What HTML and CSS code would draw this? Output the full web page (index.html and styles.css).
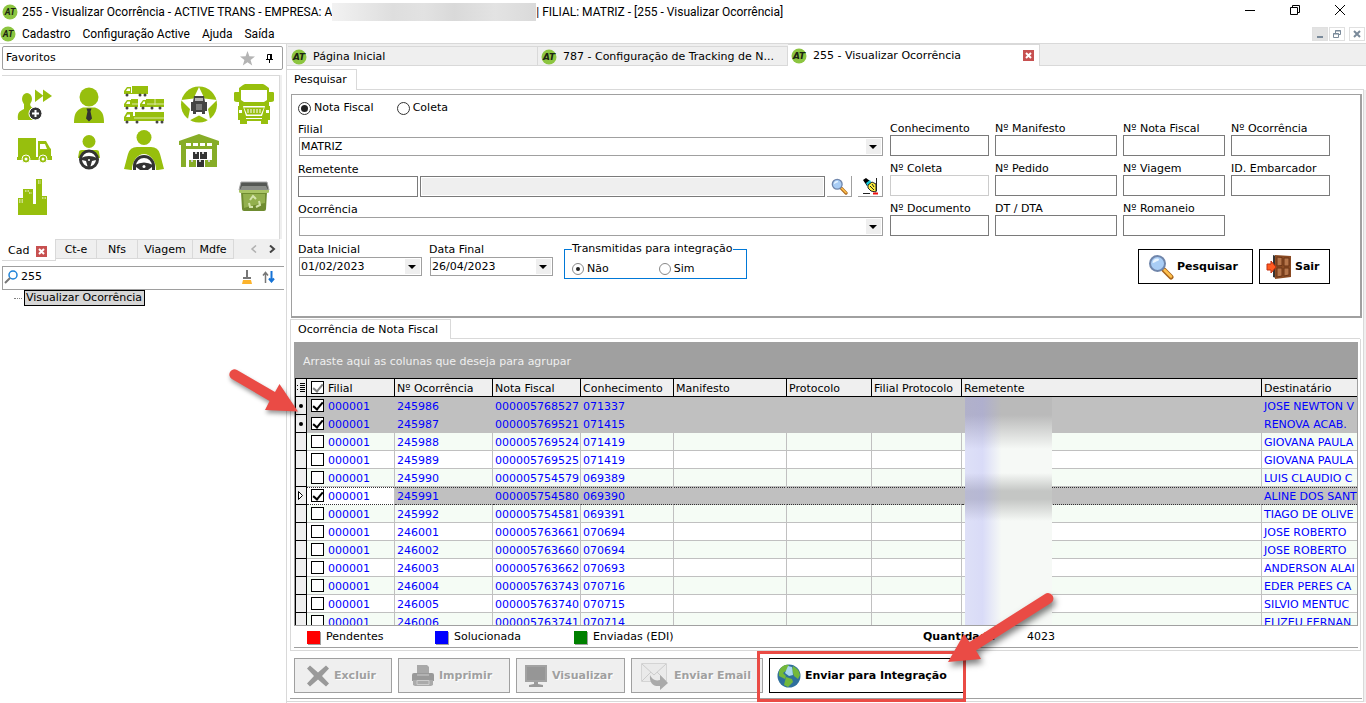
FILE: index.html
```html
<!DOCTYPE html>
<html lang="pt-BR">
<head>
    <meta charset="UTF-8">
    <title>Visualizar Ocorrência</title>
    <link rel="stylesheet" href="styles.css">
</head>
<body>
    <svg class="symbols" aria-hidden="true">
        <symbol id="logo" viewBox="0 0 16 16">
            <circle cx="8" cy="8" r="7.5" fill="#8cc540"/>
            <text x="8" y="11" text-anchor="middle" font-size="9" font-weight="bold" font-style="italic" fill="#1c2410">AT</text>
        </symbol>
        <symbol id="lens" viewBox="0 0 26 26">
            <path d="M16 16l7 7" stroke="#a8651c" stroke-width="5" stroke-linecap="round"/>
            <path d="M16.5 16l6.5 6.500" stroke="#ffc04d" stroke-width="2.500" stroke-linecap="round"/>
            <circle cx="9.500" cy="9.500" r="7.500" fill="#a9cdf5" stroke="#7086ab" stroke-width="2"/>
            <path d="M4.500 9a5 5 0 0 1 5-4.500c2 0 2 2 0 2.500s-3 2-5 2z" fill="#eaf5ff"/>
        </symbol>
    </svg>

    <header class="titlebar">
        <svg class="logo"><use href="#logo"/></svg>
        <span>255 - Visualizar Ocorrência - ACTIVE TRANS - EMPRESA: A</span>
        <span class="redacted"></span>
        <span>| FILIAL: MATRIZ - [255 - Visualizar Ocorrência]</span>
        <div class="window-controls">
            <button aria-label="Minimizar"><svg width="12" height="12" viewBox="0 0 12 12"><path d="M1 6.500h10"/></svg></button>
            <button aria-label="Restaurar"><svg width="12" height="12" viewBox="0 0 12 12"><path d="M1.500 3.500h7v7h-7zM3.500 3.500v-2h7v7h-2"/></svg></button>
            <button aria-label="Fechar"><svg width="12" height="12" viewBox="0 0 12 12"><path d="M1 1l10 10M11 1L1 11"/></svg></button>
        </div>
    </header>

    <nav class="menubar">
        <svg class="logo"><use href="#logo"/></svg>
        <a href="#">Cadastro</a>
        <a href="#">Configuração Active</a>
        <a href="#">Ajuda</a>
        <a href="#">Saída</a>
        <div class="mdi-controls">
            <button class="dim" aria-label="Minimizar janela"><svg width="10" height="10" viewBox="0 0 10 10"><path d="M2 8h6" stroke-width="2"/></svg></button>
            <button aria-label="Restaurar janela"><svg width="10" height="10" viewBox="0 0 10 10"><path d="M1.500 4.500h5v4h-5zM1 5h6M3.500 4V1.500h5v4H7M3 2h6"/></svg></button>
            <button class="last" aria-label="Fechar janela"><svg width="10" height="10" viewBox="0 0 10 10"><path d="M2 2l6 6M8 2L2 8" stroke-width="2"/></svg></button>
        </div>
    </nav>

    <div class="layout">
        <aside class="sidebar">
            <div class="favorites-head">
                <span>Favoritos</span>
                <svg width="15" height="15" viewBox="0 0 15 15"><path d="M7.500 0l1.900 5.300 5.600.2-4.400 3.500 1.600 5.500-4.700-3.200-4.700 3.200 1.600-5.500L0 5.500l5.600-.2z" fill="#b4b4b4"/></svg>
                <svg width="9" height="11" viewBox="0 0 9 11"><path d="M2.500 6V1.500h4V6M1 6.500h7M4.500 7v3" fill="none" stroke="#000"/><path d="M5 1h2v5H5z"/></svg>
            </div>

            <div class="favorites">
                <a href="#" aria-label="Cadastro de contatos"><svg viewBox="0 0 40 40">
                    <g fill="#97bf0d"><ellipse cx="13" cy="15" rx="5" ry="6"/><path d="M10 18h6c0 4 1 5 3 6l2 7v5H4c-1-8 2-9 6-11zM21 5.500l8 6V5.500l9 6.500-9 6v-6l-8 6z"/></g>
                    <circle cx="21.500" cy="29.500" r="6.500" fill="#333" stroke="#fff"/><path d="M21.500 26v7M18 29.500h7" stroke="#fff" stroke-width="2"/>
                </svg></a>
                <a href="#" aria-label="Clientes"><svg viewBox="0 0 40 40">
                    <g fill="#97bf0d"><circle cx="20" cy="13" r="9.500"/><path d="M5 39c0-9 2-13 9-15.500h12c7 2.500 9 6.500 9 15.500z"/></g>
                    <path d="M17.500 24.500h5l-1 3 1.500 7-3 3-3-3 1.500-7z" fill="#333"/>
                </svg></a>
                <a href="#" aria-label="Frota"><svg viewBox="0 0 40 40">
                    <g fill="#97bf0d"><path d="M8 2h16v8H0V7l3-4h4v6h1zM0 23v-3l3-4h4v-1h7v8zM16 23v-3l3-4h3v-1h18v8zM0 37v-4l3-5h6v4h2v-4h29v9z"/></g>
                    <path d="M2 7l1.500-2.500H6V7zM2 20l1.500-2.500H6V20zM18 20l1.500-2.500H21V20zM2 33l1.500-2.500H6V33z" fill="#fff"/>
                    <path d="M8 20h6M23 20h17M31 15v6M10 34h30" stroke="#dce9a8"/>
                    <g fill="#444"><circle cx="3" cy="11" r="1.500"/><circle cx="16" cy="11" r="1.500"/><circle cx="21" cy="11" r="1.500"/><circle cx="3" cy="24" r="1.500"/><circle cx="12" cy="24" r="1.500"/><circle cx="19" cy="24" r="1.500"/><circle cx="28" cy="24" r="1.500"/><circle cx="36" cy="24" r="1.500"/><circle cx="3" cy="38" r="1.500"/><circle cx="13" cy="38" r="1.500"/><circle cx="33" cy="38" r="1.500"/><circle cx="38" cy="38" r="1.500"/></g>
                </svg></a>
                <a href="#" aria-label="Caminhão"><svg viewBox="0 0 40 40">
                    <circle cx="20" cy="20.500" r="18" fill="#97bf0d"/>
                    <path d="M20 3l5.500 11.500L38 16l-9 9 2.500 12.500L20 31.500 8.500 37.500 11 25l-9-9 12.500-1.500z" fill="#fff"/>
                    <path d="M15 12h10l1 6h2v9h-2v3h-3v-2h-6v2h-3v-3h-2v-9h2z" fill="#444"/>
                    <path d="M16 14h8v3h-8z" fill="#b5b5b5"/><path d="M17 21h6M17 23h6M17 25h6" stroke="#b5b5b5"/>
                </svg></a>
                <a href="#" aria-label="Ônibus"><svg viewBox="0 0 40 40">
                    <path d="M9 1l2-1h18l2 1 4 3v4h4c1 0 1 1 1 2v6c0 1-1 2-3 2h-2v4h1v14h-2v4h-7v-3H13v3H6v-4H4V22h1v-4H3c-2 0-3-1-3-2v-6c0-1 0-2 1-2h4V4z" fill="#97bf0d"/>
                    <path d="M7 6h26v10l-3 2H10l-3-2zM9 22h22l-3 10H12z" fill="#fff"/>
                    <path d="M10 23.500h20l-3 7H13z" fill="#97bf0d"/><path d="M14 25v4M17 25v4M20 25v4M23 25v4M26 25v4" stroke="#fff"/>
                    <path d="M5 26h3v3H5zM32 26h3v3h-3zM12 34h16v1H12z" fill="#fff"/>
                </svg></a>
                <a href="#" aria-label="Veículos"><svg viewBox="0 0 40 40">
                    <path d="M4 8h18v19H4zM24 11h8l4 7 1 1v7h1v4H3v-3h21z" fill="#97bf0d"/>
                    <path d="M26 14h5l2 5h-7z" fill="#fff"/>
                    <g fill="#97bf0d" stroke="#fff"><circle cx="12" cy="29" r="4"/><circle cx="29" cy="29" r="4"/></g>
                    <circle cx="12" cy="29" r="1.500" fill="#fff"/><circle cx="29" cy="29" r="1.500" fill="#fff"/>
                </svg></a>
                <a href="#" aria-label="Motoristas"><svg viewBox="0 0 40 40">
                    <circle cx="20" cy="11.500" r="6.500" fill="#97bf0d"/><path d="M10 22q0-2 3-2h14q3 0 3 2l1 6H9z" fill="#97bf0d"/>
                    <circle cx="20" cy="29.500" r="8.500" fill="#fff" stroke="#333" stroke-width="3"/>
                    <path d="M12 28q8-4 16 0l-1 2-4 1-2 7h-2l-2-7-4-1z" fill="#333"/><circle cx="20" cy="30" r="1" fill="#fff"/>
                </svg></a>
                <a href="#" aria-label="Proprietários"><svg viewBox="0 0 40 40">
                    <circle cx="20" cy="7.500" r="7.500" fill="#97bf0d"/><path d="M0 39l4-15q2-7 9-7h14q7 0 9 7l4 15-6 1H7z" fill="#97bf0d"/>
                    <path d="M8 40a12 16 0 0 1 24 0z" fill="#fff"/>
                    <path d="M10.500 40v-4a9.500 9.500 0 0 1 19 0v4" fill="none" stroke="#333" stroke-width="3"/>
                    <path d="M11 35q9-5 18 0l-1 2-4 3h-8l-4-3z" fill="#333"/><circle cx="20" cy="36.500" r="1.500" fill="#fff"/>
                </svg></a>
                <a href="#" aria-label="Armazém"><svg viewBox="0 0 40 40">
                    <path d="M0 11L20 4l20 7v4h-2v22h-5V19H7v18H2V15H0z" fill="#87ad27"/>
                    <path d="M7 13h5v3H7zM14 13h5v3h-5zM21 13h5v3h-5zM28 13h5v3h-5z" fill="#fff"/>
                    <path d="M14 22h6v7h-6zM21 22h7v7h-7zM18 30h7v7h-7z" fill="#333"/><path d="M10 30h7v7h-7zM26 30h7v7h-7z" fill="#87ad27"/>
                    <path d="M16 22h2v2h-2zM23 22h2v2h-2zM20 30h2v2h-2zM12 30h2v2h-2zM29 30h2v2h-2z" fill="#ccc"/>
                </svg></a>
                <span></span>
                <a href="#" aria-label="Empresas"><svg viewBox="0 0 40 40">
                    <path d="M4 39V22h5V13h10v15h3V3h6v17h5v19z" fill="#97bf0d"/>
                    <path d="M24 5h3M24 7h3M11 15h5M15 17h3M5 24h4M5 26h4M28 22h4" stroke="#fff" stroke-dasharray="1.500 1"/>
                </svg></a>
                <span></span><span></span><span></span>
                <a href="#" aria-label="Lixeira"><svg viewBox="0 0 40 40">
                    <path d="M7 6h26l2 8H5z" fill="#555854" stroke="#aaa"/><path d="M8 10h24l2 4H6z" fill="#8a8d88"/>
                    <path d="M7 16h26l-1 17q0 2-2 2H10q-2 0-2-2z" fill="#6f8c30"/>
                    <path d="M5 14h30v2q0 1-2 1H7q-2 0-2-1z" fill="#a9c465"/><path d="M9 18h22v9q-12 2-21 5z" fill="#93b04e"/>
                    <path d="M16 24l3-4 3 3M25 25l1 4-4 2M19 31h-3l-1-4" fill="none" stroke="#d5e4ac" stroke-width="2"/>
                </svg></a>
            </div>

            <div class="side-tabs">
                <button class="side-tab active">Cad <svg class="close" viewBox="0 0 11 11"><path d="M3 3l5 5M8 3L3 8"/></svg></button>
                <button class="side-tab">Ct-e</button>
                <button class="side-tab">Nfs</button>
                <button class="side-tab wide">Viagem</button>
                <button class="side-tab">Mdfe</button>
                <div class="scroll-buttons">
                    <svg width="8" height="8" viewBox="0 0 8 8"><path d="M6 0.500L2 4l4 3.500" stroke="#b0b0b0" stroke-width="1.500"/></svg>
                    <svg width="8" height="8" viewBox="0 0 8 8"><path d="M2 0.500L6 4 2 7.500" stroke="#444" stroke-width="2"/></svg>
                </div>
            </div>

            <div class="search">
                <svg width="14" height="14" viewBox="0 0 14 14"><circle cx="9" cy="5" r="4" fill="#fff" stroke="#1e82d8" stroke-width="1.500"/><path d="M6 8l-5 5" stroke="#777" stroke-width="2"/></svg>
                <input type="text" value="255" aria-label="Pesquisar no menu">
                <svg width="12" height="14" viewBox="0 0 12 14"><path d="M5 0h2v7h3v2H2V7h3z" fill="#777"/><path d="M2 10h8l1 4H1z" fill="#fcb32c"/></svg>
                <svg width="13" height="12" viewBox="0 0 13 12"><path d="M3.500 12V2M1 4.500L3.500 1.500 6 4.500" fill="none" stroke="#777" stroke-width="1.500"/><path d="M9.500 0v10M7 7.500l2.500 3 2.500-3" fill="none" stroke="#1673d6" stroke-width="2"/></svg>
            </div>
            <div class="tree"><a href="#">Visualizar Ocorrência</a></div>
        </aside>

        <main class="workspace">
            <div class="window-tabs">
                <button class="window-tab"><svg class="logo"><use href="#logo"/></svg>Página Inicial</button>
                <button class="window-tab"><svg class="logo"><use href="#logo"/></svg>787 - Configuração de Tracking de N...</button>
                <button class="window-tab active"><svg class="logo"><use href="#logo"/></svg>255 - Visualizar Ocorrência <svg class="close" viewBox="0 0 11 11"><path d="M3 3l5 5M8 3L3 8"/></svg></button>
            </div>

            <div class="page-tabs"><button class="page-tab">Pesquisar</button></div>
            <div class="page">
                <form class="filters" onsubmit="return false">
                    <div class="filters-left">
                        <div class="type">
                            <label><input type="radio" name="tipo" checked>Nota Fiscal</label>
                            <label><input type="radio" name="tipo">Coleta</label>
                        </div>
                        <div class="field">
                            <label for="filial">Filial</label>
                            <div class="combo"><select id="filial"><option>MATRIZ</option></select></div>
                        </div>
                        <div class="field">
                            <label for="remetente">Remetente</label>
                            <div class="sender">
                                <input type="text" id="remetente">
                                <input type="text" class="sender-name" aria-label="Nome do remetente" disabled>
                                <button class="tool" aria-label="Buscar remetente"><svg width="17" height="17"><use href="#lens"/></svg></button>
                                <button class="tool" aria-label="Limpar remetente"><svg width="17" height="17" viewBox="0 0 17 17"><path d="M1 2l3-2 4 3-3 5z" fill="#000"/><path d="M4 5l4-3 2 4-4 3z" fill="#14c8d8"/><path d="M6 7l4-3 4 2v8l-5-1-3-3z" fill="#ffef3c" stroke="#222"/><path d="M8 8l4 4M10 6l2 3" stroke="#222"/><path d="M14.500 0v13M1 15.500h7" stroke="#222"/><path d="M11 15.500h5" stroke="#e11" stroke-width="2"/></svg></button>
                            </div>
                        </div>
                        <div class="field">
                            <label for="ocorrencia">Ocorrência</label>
                            <div class="combo"><select id="ocorrencia"><option></option></select></div>
                        </div>
                        <div class="dates">
                            <div class="field">
                                <label for="dataInicial">Data Inicial</label>
                                <div class="combo"><input type="text" id="dataInicial" value="01/02/2023"></div>
                            </div>
                            <div class="field">
                                <label for="dataFinal">Data Final</label>
                                <div class="combo"><input type="text" id="dataFinal" value="26/04/2023"></div>
                            </div>
                            <fieldset>
                                <legend>Transmitidas para integração</legend>
                                <label><input type="radio" name="transmitidas" checked>Não</label>
                                <label><input type="radio" name="transmitidas">Sim</label>
                            </fieldset>
                        </div>
                    </div>
                    <div class="filters-right">
                        <div class="numbers">
                            <div class="field"><label for="conhecimento">Conhecimento</label><input type="text" id="conhecimento"></div>
                            <div class="field"><label for="manifesto">Nº Manifesto</label><input type="text" id="manifesto"></div>
                            <div class="field"><label for="notaFiscal">Nº Nota Fiscal</label><input type="text" id="notaFiscal"></div>
                            <div class="field"><label for="numOcorrencia">Nº Ocorrência</label><input type="text" id="numOcorrencia"></div>
                            <div class="field"><label for="coleta">Nº Coleta</label><input type="text" id="coleta" class="off"></div>
                            <div class="field"><label for="pedido">Nº Pedido</label><input type="text" id="pedido"></div>
                            <div class="field"><label for="viagem">Nº Viagem</label><input type="text" id="viagem"></div>
                            <div class="field"><label for="embarcador">ID. Embarcador</label><input type="text" id="embarcador"></div>
                            <div class="field"><label for="documento">Nº Documento</label><input type="text" id="documento"></div>
                            <div class="field"><label for="dta">DT / DTA</label><input type="text" id="dta"></div>
                            <div class="field"><label for="romaneio">Nº Romaneio</label><input type="text" id="romaneio"></div>
                        </div>
                        <div class="form-buttons">
                            <button class="btn"><svg width="26" height="26"><use href="#lens"/></svg>Pesquisar</button>
                            <button class="btn exit"><svg width="26" height="26" viewBox="0 0 26 26"><path d="M7 1l3 1v22l-3-1z" fill="#333"/><path d="M9 1l16 1v21L9 25z" fill="#8a4a22"/><path d="M11 3l5 .5v8l-5 .5zM18 4h5v8h-5zM11 14h5v8l-5 1zM18 14h5v7l-5 1z" fill="#b5754a" stroke="#6b3517"/><path d="M1 10h4V7l5 6-5 6v-3H1z" fill="#ff5a1f" stroke="#c33010"/></svg>Sair</button>
                        </div>
                    </div>
                </form>

                <div class="result-tabs"><button class="result-tab">Ocorrência de Nota Fiscal</button></div>
                <div class="results">
                    <div class="grid">
                        <div class="group-bar">Arraste aqui as colunas que deseja para agrupar</div>
                        <div class="grid-body">
                            <table>
                                <colgroup>
                                    <col class="c-mark"><col class="c-filial"><col class="c-ocorrencia"><col class="c-nota"><col class="c-conhecimento"><col class="c-manifesto"><col class="c-protocolo"><col class="c-filial-prot"><col class="c-remetente"><col>
                                </colgroup>
                                <thead>
                                    <tr><th><svg width="9" height="11" viewBox="0 0 9 11"><path d="M3 1.500h5M3 3.500h5M3 5.500h5M3 7.500h5M3 9.500h5M0 3.500h1M0 7.500h1" stroke="#000"/></svg></th><th><label><input type="checkbox" class="all" checked>Filial</label></th><th>Nº Ocorrência</th><th>Nota Fiscal</th><th>Conhecimento</th><th>Manifesto</th><th>Protocolo</th><th>Filial Protocolo</th><th>Remetente</th><th>Destinatário</th></tr>
                                </thead>
                                <tbody>
                                    <tr class="selected"><td><i class="dot"></i></td><td><label><input type="checkbox" checked>000001</label></td><td>245986</td><td>000005768527</td><td>071337</td><td></td><td></td><td></td><td></td><td>JOSE NEWTON V</td></tr>
                                    <tr class="selected"><td><i class="dot"></i></td><td><label><input type="checkbox" checked>000001</label></td><td>245987</td><td>000005769521</td><td>071415</td><td></td><td></td><td></td><td></td><td>RENOVA ACAB.</td></tr>
                                    <tr><td></td><td><label><input type="checkbox">000001</label></td><td>245988</td><td>000005769524</td><td>071419</td><td></td><td></td><td></td><td></td><td>GIOVANA PAULA</td></tr>
                                    <tr><td></td><td><label><input type="checkbox">000001</label></td><td>245989</td><td>000005769525</td><td>071419</td><td></td><td></td><td></td><td></td><td>GIOVANA PAULA</td></tr>
                                    <tr><td></td><td><label><input type="checkbox">000001</label></td><td>245990</td><td>000005754579</td><td>069389</td><td></td><td></td><td></td><td></td><td>LUIS CLAUDIO C</td></tr>
                                    <tr class="selected current"><td><svg width="7" height="9" viewBox="0 0 7 9"><path d="M1.500 0.500v8L5.500 4.500z" fill="#fff" stroke="#000"/></svg></td><td><label><input type="checkbox" checked>000001</label></td><td>245991</td><td>000005754580</td><td>069390</td><td></td><td></td><td></td><td></td><td>ALINE DOS SANT</td></tr>
                                    <tr><td></td><td><label><input type="checkbox">000001</label></td><td>245992</td><td>000005754581</td><td>069391</td><td></td><td></td><td></td><td></td><td>TIAGO DE OLIVE</td></tr>
                                    <tr><td></td><td><label><input type="checkbox">000001</label></td><td>246001</td><td>000005763661</td><td>070694</td><td></td><td></td><td></td><td></td><td>JOSE ROBERTO</td></tr>
                                    <tr><td></td><td><label><input type="checkbox">000001</label></td><td>246002</td><td>000005763660</td><td>070694</td><td></td><td></td><td></td><td></td><td>JOSE ROBERTO</td></tr>
                                    <tr><td></td><td><label><input type="checkbox">000001</label></td><td>246003</td><td>000005763662</td><td>070693</td><td></td><td></td><td></td><td></td><td>ANDERSON ALAI</td></tr>
                                    <tr><td></td><td><label><input type="checkbox">000001</label></td><td>246004</td><td>000005763743</td><td>070716</td><td></td><td></td><td></td><td></td><td>EDER PERES CA</td></tr>
                                    <tr><td></td><td><label><input type="checkbox">000001</label></td><td>246005</td><td>000005763740</td><td>070715</td><td></td><td></td><td></td><td></td><td>SILVIO MENTUC</td></tr>
                                    <tr><td></td><td><label><input type="checkbox">000001</label></td><td>246006</td><td>000005763741</td><td>070714</td><td></td><td></td><td></td><td></td><td>ELIZEU FERNAN</td></tr>
                                </tbody>
                            </table>
                            <div class="blurred"></div>
                        </div>
                        <svg class="arrow-rows" width="76" height="50" viewBox="0 0 76 50"><path d="M9 2l38 22 4.500-8L70 43.500l-33-1.500 4.500-9L4 11a5 5 0 0 1 5-9z" fill="#ea4b45"/></svg>
                    </div>
                    <div class="summary">
                        <span class="status red">Pendentes</span>
                        <span class="status blue">Solucionada</span>
                        <span class="status green">Enviadas (EDI)</span>
                        <b>Quantidade</b>
                        <span>4023</span>
                    </div>
                </div>

                <div class="actions">
                    <button class="btn" disabled><svg width="24" height="24" viewBox="0 0 24 24"><path d="M4 1.500l8 7 8-7 3 3-7 7.500 7 7.500-3 3-8-7-8 7-3-3L8 12 1 4.500z" fill="#999"/></svg>Excluir</button>
                    <button class="btn print" disabled><svg width="24" height="24" viewBox="0 0 24 24"><path d="M6 1h10l2 2v7H6z" fill="#a8a8a8"/><path d="M1 11q0-2 2-2h18q2 0 2 2v6H1z" fill="#999"/><path d="M2 16h20v5l-2 1H4l-2-1z" fill="#aaa"/><path d="M6 11h12M6 16.500h12v4H6z" fill="#aaa" stroke="#ccc"/></svg>Imprimir</button>
                    <button class="btn view" disabled><svg width="24" height="24" viewBox="0 0 24 24"><path d="M1 1h22v17H1z" fill="#a2a2a2"/><path d="M3 3h18v13H3z" fill="#969696"/><path d="M10 18h4v2l5 1v2H5v-2l5-1z" fill="#999"/></svg>Visualizar</button>
                    <button class="btn mail" disabled><svg width="30" height="28" viewBox="0 0 30 28"><path d="M1.500 1.500h25v18h-25z" fill="#eaeaea" stroke="#d4d4d4"/><path d="M2 2l12 11L26 2M2 19l9-9M26 19l-9-9" fill="none" stroke="#ccc"/><path d="M10 13q3 7 10 5v-5l8 8-8 7v-4Q9 25 10 13z" fill="#aaa"/></svg>Enviar Email</button>
                    <div class="send">
                        <button class="btn integrate"><svg width="24" height="24" viewBox="0 0 24 24"><circle cx="12" cy="12" r="11.500" fill="#2f6f9c"/><path d="M3 5q4-5 9-4l-2 5-4 3 3 3-1 3-6-3q-1-4 1-7zM16 2q6 3 7 9l-2 4-4-3-2-6zM9 13l6 2 1 3-5 5-4-2z" fill="#73b83a"/><path d="M11 2l4 1 1 8-4 1-4-3z" fill="#a9d8ee"/></svg>Enviar para Integração</button>
                        <div class="highlight"></div>
                        <svg class="arrow-send" width="112" height="76" viewBox="0 0 112 76"><path d="M101 4L25.500 52 20 44 4 72l33-3-5-8.500L107 13a5 5 0 0 0-6-9z" fill="#ea4b45"/></svg>
                    </div>
                </div>
            </div>
        </main>
    </div>
</body>
</html>
```
FILE: styles.css
```css
* {
    box-sizing: border-box;
}

body {
    margin: 0;
    height: 100vh;
    display: flex;
    flex-direction: column;
    overflow: hidden;
    background-color: #fff;
    color: #000;
    font-family: "DejaVu Sans", Verdana, sans-serif;
    font-size: 11px;
    line-height: 14px;
}

button,
input,
select {
    font: inherit;
    color: inherit;
    margin: 0;
    padding: 0;
    border: none;
    border-radius: 0;
    background: none;
}

a {
    color: inherit;
    text-decoration: none;
}

svg {
    flex-shrink: 0;
}

.symbols {
    position: absolute;
    width: 0;
    height: 0;
}

.logo {
    width: 16px;
    height: 16px;
}

.close {
    width: 11px;
    height: 11px;
    background-color: #c75050;
    stroke: #fff;
    stroke-width: 2;
}

/* window title and menu */
.titlebar,
.menubar {
    display: flex;
    align-items: center;
    font-family: Roboto, "Segoe UI", sans-serif;
    font-size: 12px;
    white-space: nowrap;
}

.titlebar {
    height: 24px;
    padding: 0 14px 0 2px;
}

.titlebar .logo {
    margin-right: 4px;
}

.redacted {
    width: 204px;
    height: 18px;
    background: linear-gradient(90deg, #f2f2f2, #dedede 30%, #e2e2e2 45%, #d9d9d9 60%, #e3e3e3 80%, #dadada);
}

.window-controls {
    margin-left: auto;
    align-self: flex-start;
    display: flex;
    gap: 33px;
    padding: 4px 6px 0 0;
}

.window-controls button {
    height: 12px;
}

.window-controls svg {
    display: block;
    fill: none;
    stroke: #000;
}

.menubar {
    height: 20px;
    padding-right: 1px;
    border-bottom: 1px solid #d9d9d9;
}

.menubar .logo {
    margin-right: 6px;
}

.menubar a {
    margin-right: 12px;
}

.mdi-controls {
    display: flex;
    gap: 1px;
    margin-left: auto;
}

.mdi-controls button {
    display: flex;
    align-items: center;
    justify-content: center;
    width: 16px;
    height: 14px;
    border: 1px solid #e0e0e0;
}

.mdi-controls .dim {
    background-color: #e3e3e3;
}

.mdi-controls .last {
    margin-left: 3px;
}

.mdi-controls svg {
    fill: none;
    stroke: #7a8a9a;
}

.layout {
    flex: 1;
    min-height: 0;
    display: flex;
}

/* left column */
.sidebar {
    width: 286px;
    flex-shrink: 0;
    padding: 2px 2px 0 2px;
}

.favorites-head {
    display: flex;
    align-items: center;
    height: 24px;
    margin-right: 1px;
    padding: 0 8px 0 3px;
    border: 1px solid #9e9e9e;
    border-radius: 2px;
}

.favorites-head span {
    flex: 1;
}

.favorites-head svg + svg {
    margin-left: 10px;
}

.favorites {
    display: grid;
    grid-template-columns: repeat(5, 55px);
    grid-auto-rows: 46px;
    height: 164px;
    margin: 5px 4px 0 0;
    padding: 5px 0 0 4px;
    border-top: 1px solid #d9d9d9;
    border-right: 1px solid #d9d9d9;
    box-shadow: 2px 0 #efefef;
}

.favorites a {
    display: flex;
    align-items: center;
    justify-content: center;
}

.favorites svg {
    width: 40px;
    height: 40px;
}

.side-tabs {
    display: flex;
    height: 22px;
    margin-right: 4px;
}

.side-tab {
    height: 20px;
    width: 41px;
    padding-top: 1px;
    border: 1px solid #d9d9d9;
    border-width: 1px 1px 1px 0;
    background-color: #efefef;
}

.side-tab.wide {
    width: 55px;
}

.side-tab.active {
    display: flex;
    align-items: center;
    gap: 7px;
    width: 54px;
    height: 22px;
    padding: 3px 0 0 6px;
    border-top: none;
    background-color: #fff;
}

.scroll-buttons {
    flex: 1;
    display: flex;
    align-items: center;
    justify-content: flex-end;
    gap: 10px;
    padding-right: 4px;
    height: 20px;
    background-color: #efefef;
}

.scroll-buttons svg {
    fill: none;
}

.search {
    display: flex;
    align-items: center;
    height: 24px;
    margin-top: 5px;
    padding: 0 9px 2px 1px;
    border: 1px solid #9e9e9e;
    border-right: none;
}

.search input {
    flex: 1;
    min-width: 0;
    padding-left: 3px;
}

.search svg + svg {
    margin-left: 9px;
}

.tree {
    display: flex;
    align-items: center;
    padding-left: 12px;
}

.tree::before {
    content: "";
    width: 8px;
    border-top: 1px dotted #808080;
}

.tree a {
    margin-left: 2px;
    padding: 0 2px 0 1px;
    border: 1px solid #000;
    background-color: #d6d6d6;
}

/* open windows */
.workspace {
    flex: 1;
    min-width: 0;
    display: flex;
    flex-direction: column;
    border-left: 1px solid #d9d9d9;
}

.window-tabs {
    display: flex;
    align-items: flex-end;
    height: 22px;
    flex-shrink: 0;
    padding-left: 1px;
    background-color: #efefef;
    box-shadow: inset 0 -1px #d9d9d9;
}

.window-tab {
    display: flex;
    align-items: center;
    gap: 6px;
    width: 250px;
    height: 20px;
    padding: 2px 0 0 3px;
    border: 1px solid #d9d9d9;
    border-left: none;
    white-space: nowrap;
}

.window-tab.active {
    width: 252px;
    height: 22px;
    padding: 0 0 0 3px;
    border-bottom: none;
    background-color: #fff;
}

.window-tab .close {
    margin: 0 5px 0 auto;
}

.page-tabs,
.result-tabs {
    display: flex;
    flex-shrink: 0;
    box-shadow: inset 0 -1px #d9d9d9;
}

.page-tabs {
    margin: 3px 2px 0 0;
}

.page-tab,
.result-tab {
    height: 21px;
    padding: 0 9px 0 7px;
    border: 1px solid #d9d9d9;
    border-width: 1px 1px 0 0;
    background-color: #fff;
}

.page {
    flex: 1;
    min-height: 0;
    display: flex;
    flex-direction: column;
    margin: 0 2px 1px 0;
    padding: 4px 1px 0 3px;
    border: 1px solid #d9d9d9;
    border-width: 0 1px 1px 0;
    box-shadow: 2px 0 #efefef;
}

/* search form */
.filters {
    display: flex;
    gap: 7px;
    height: 224px;
    flex-shrink: 0;
    margin-left: 1px;
    padding: 6px 30px 0 6px;
    border: 1px solid #a0a0a0;
    border-width: 1px 2px 2px 1px;
}

.filters-left {
    flex: 1;
}

.type {
    display: flex;
    height: 21px;
    gap: 23px;
}

.type label,
fieldset label {
    display: flex;
    align-items: center;
    height: 14px;
    gap: 3px;
}

input[type="radio"] {
    appearance: none;
    display: flex;
    align-items: center;
    justify-content: center;
    width: 13px;
    height: 13px;
    border: 1px solid #333;
    border-radius: 50%;
}

input[type="radio"]:checked::after {
    content: "";
    width: 7px;
    height: 7px;
    border-radius: 50%;
    background-color: #222;
}

.field {
    height: 40px;
}

.field label {
    display: block;
    height: 14px;
    line-height: 16px;
    white-space: nowrap;
}

.field > input,
.sender input {
    height: 21px;
    padding: 0 2px;
    border: 1px solid #7a7a7a;
    width: 100%;
}

.field > input.off {
    border-color: #ccc;
}

.combo {
    position: relative;
    height: 19px;
    margin: 1px 0 0 1px;
    border: 1px solid #a0a0a0;
}

.combo select,
.combo input {
    appearance: none;
    display: block;
    width: 100%;
    height: 17px;
    padding: 0 18px 0 1px;
}

/* drop-down arrow */
.combo::before {
    content: "";
    position: absolute;
    top: 1px;
    right: 1px;
    width: 15px;
    height: 15px;
    background-color: #efefef;
    pointer-events: none;
}

.combo::after {
    content: "";
    position: absolute;
    top: 7px;
    right: 5px;
    border: 4px solid transparent;
    border-top-color: #000;
    border-bottom: none;
    pointer-events: none;
}

.sender {
    display: flex;
    gap: 2px;
}

.sender input {
    width: 120px;
}

.sender .sender-name {
    flex: 1;
    background-color: #efefef;
    box-shadow: inset 0 0 0 1px #fff;
}

.tool {
    display: flex;
    align-items: center;
    justify-content: center;
    width: 25px;
    height: 21px;
    border: 1px solid #a0a0a0;
    border-width: 0 1px 1px 0;
}

.tool + .tool {
    margin-left: 4px;
}

.dates {
    display: flex;
}

.dates .field {
    width: 124px;
    margin-right: 7px;
}

fieldset {
    display: flex;
    gap: 50px;
    width: 183px;
    height: 37px;
    margin: 0 0 0 4px;
    padding: 6px 0 0 7px;
    border: 1px solid #0078d7;
}

legend {
    padding: 0;
    white-space: nowrap;
}

fieldset input[type="radio"] {
    width: 12px;
    height: 12px;
    border-color: #888;
}

fieldset input[type="radio"]:checked::after {
    width: 4px;
    height: 4px;
}

.filters-right {
    width: 440px;
    padding-top: 20px;
}

.numbers {
    display: grid;
    grid-template-columns: 99px 122px 102px 99px;
    column-gap: 6px;
}

.form-buttons {
    display: flex;
    justify-content: flex-end;
    gap: 6px;
    padding-top: 8px;
}

.btn {
    display: flex;
    align-items: center;
    gap: 3px;
    height: 35px;
    width: 115px;
    padding: 0 0 0 9px;
    border: 1px solid #000;
    background-color: #fff;
    font-weight: bold;
    white-space: nowrap;
}

.btn.exit {
    width: 71px;
    padding-left: 6px;
}

/* results */
.result-tabs {
    margin: 1px 2px 0 0;
}

.result-tab {
    height: 20px;
    padding-right: 12px;
    border-left-width: 1px;
}

.results {
    flex: 1;
    min-height: 0;
    display: flex;
    flex-direction: column;
    margin-right: 1px;
    padding: 3px 2px 2px 3px;
    border: 1px solid #d9d9d9;
    border-top: none;
}

.grid {
    position: relative;
    flex: 1;
    min-height: 0;
    display: flex;
    flex-direction: column;
    border: 1px solid #a0a0a0;
    border-top: none;
}

.group-bar {
    height: 36px;
    flex-shrink: 0;
    padding: 13px 8px 0;
    background-color: #a0a0a0;
    color: #efefef;
}

.grid-body {
    position: relative;
    flex: 1;
    min-height: 0;
    overflow: hidden;
}

table {
    width: 100%;
    table-layout: fixed;
    border-spacing: 0;
}

.c-mark { width: 12px; }
.c-filial { width: 88px; }
.c-ocorrencia { width: 98px; }
.c-nota { width: 88px; }
.c-conhecimento { width: 93px; }
.c-manifesto { width: 113px; }
.c-protocolo { width: 85px; }
.c-filial-prot { width: 90px; }
.c-remetente { width: 300px; }

th,
td {
    height: 18px;
    padding: 3px 0 0 2px;
    border: 0 solid #c0c0c0;
    border-width: 0 1px 1px 0;
    overflow: hidden;
    text-align: left;
    white-space: nowrap;
}

th {
    height: 19px;
    border-color: #000;
    border-top-width: 1px;
    background-color: #efefef;
    font-weight: normal;
}

td {
    color: #0000ff;
}

th:last-child,
td:last-child {
    border-right: none;
}

th:first-child,
td:first-child {
    padding: 0 0 0 1px;
    border-color: #000;
    border-left-width: 1px;
    background-color: #efefef;
}

th:nth-child(2),
td:nth-child(2) {
    padding-top: 1px;
}

th svg,
td svg {
    display: block;
}

tbody tr:nth-child(odd) {
    background-color: #f5fcf5;
}

tbody tr.selected {
    background-color: #c0c0c0;
}

.selected td:not(:first-child) {
    border-color: #c0c0c0;
}

.current td:not(:first-child) {
    border-bottom: 1px dotted #333;
    background-image: repeating-linear-gradient(90deg, #333 0, #333 1px, transparent 1px, transparent 2px);
    background-size: 100% 1px;
    background-repeat: no-repeat;
}

.current td:nth-child(2) {
    background-color: #fff;
}

.dot {
    display: block;
    width: 4px;
    height: 4px;
    margin-left: 2px;
    border-radius: 2px;
    background-color: #000;
}

td label,
th label {
    display: flex;
    align-items: flex-start;
    gap: 4px;
    height: 14px;
    padding-left: 2px;
    line-height: 16px;
}

input[type="checkbox"] {
    appearance: none;
    display: flex;
    justify-content: center;
    width: 13px;
    height: 13px;
    border: 1px solid #000;
    background-color: #fff;
}

input[type="checkbox"]:checked::after {
    content: "";
    width: 4px;
    height: 8px;
    border: solid #000;
    border-width: 0 2px 2px 0;
    transform: rotate(40deg);
}

input.all:checked::after {
    border-color: #808080;
}

.blurred {
    position: absolute;
    top: 19px;
    bottom: 0;
    left: 670px;
    width: 87px;
    background: linear-gradient(90deg, rgba(150, 150, 250, 0.25), rgba(150, 150, 250, 0.3) 20%, rgba(160, 160, 250, 0) 42%),
        linear-gradient(#bababa 18px, #f6f9f6 52px, #f6f9f6 76px, #c4c6c4 94px, #c4c6c4 102px, #f6f9f6 124px);
}

.arrow-rows {
    position: absolute;
    top: 26px;
    left: -67px;
    overflow: visible;
    filter: drop-shadow(1px 3px 2px rgba(0, 0, 0, 0.4));
}

.summary {
    display: flex;
    align-items: center;
    height: 22px;
    flex-shrink: 0;
    padding: 1px 0 0 13px;
    border-bottom: 1px solid #a0a0a0;
}

.status {
    display: flex;
    align-items: center;
    gap: 6px;
    width: 128px;
}

.status::before {
    content: "";
    width: 13px;
    height: 13px;
    background-color: #f00;
    box-shadow: 1px 1px #a0a0a0;
}

.status.blue {
    width: 139px;
}

.status.blue::before {
    background-color: #00f;
}

.status.green {
    width: 349px;
}

.status.green::before {
    background-color: #008000;
}

.summary b {
    width: 104px;
}

/* bottom buttons */
.actions {
    display: flex;
    gap: 6px;
    flex-shrink: 0;
    margin-bottom: 2px;
    padding: 7px 0 5px 4px;
    border-bottom: 1px solid #a0a0a0;
}

.actions .btn {
    width: 98px;
    padding-left: 11px;
    gap: 4px;
}

.actions .btn:disabled {
    border-color: #a0a0a0;
    background-color: #efefef;
    color: #a0a0a0;
    text-shadow: 1px 1px #fff;
}

.actions .print {
    width: 112px;
    padding-left: 12px;
}

.actions .view {
    width: 109px;
    padding-left: 7px;
}

.actions .mail {
    width: 132px;
    padding-left: 8px;
}

.actions .integrate {
    width: 196px;
    padding-left: 7px;
}

.send {
    position: relative;
}

.highlight {
    position: absolute;
    top: -7px;
    left: -12px;
    width: 209px;
    height: 51px;
    border: 3px solid #ea4b45;
}

.arrow-send {
    position: absolute;
    left: 175px;
    top: -68px;
    overflow: visible;
    filter: drop-shadow(2px 4px 3px rgba(0, 0, 0, 0.5));
}
```
